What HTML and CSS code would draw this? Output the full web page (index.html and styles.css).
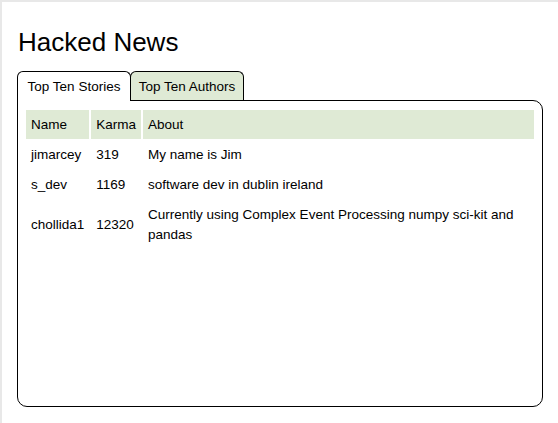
FILE: index.html
```html
<!DOCTYPE html>
<html>
<head>
<meta charset="utf-8">
<title>Hacked News</title>
<link rel="stylesheet" href="styles.css">
</head>
<body>
<div class="page">
  <h1 class="title">Hacked News</h1>
  <div class="tabs">
    <div class="tab tab-active">Top Ten Stories</div>
    <div class="tab tab-inactive">Top Ten Authors</div>
  </div>
  <div class="panel">
    <table class="authors">
      <thead>
        <tr><th>Name</th><th>Karma</th><th>About</th></tr>
      </thead>
      <tbody>
        <tr><td>jimarcey</td><td>319</td><td>My name is Jim</td></tr>
        <tr><td>s_dev</td><td>1169</td><td>software dev in dublin ireland</td></tr>
        <tr><td>chollida1</td><td>12320</td><td>Currently using Complex Event Processing numpy sci-kit and pandas</td></tr>
      </tbody>
    </table>
  </div>
</div>
</body>
</html>
```

FILE: styles.css
```css
html, body {
  margin: 0;
  padding: 0;
  background: #ffffff;
}
body {
  font-family: "Liberation Sans", Arial, Helvetica, sans-serif;
  color: #000;
}
.page {
  box-sizing: border-box;
  min-height: 100vh;
  border-top: 2px solid #e8e8e8;
  border-left: 2px solid #e8e8e8;
  padding: 0 15px 16px 15px;
}
.title {
  margin: 26px 0 14px 1px;
  font-size: 26px;
  font-weight: normal;
  line-height: 29px;
}
.tabs {
  display: flex;
}
.tab {
  box-sizing: border-box;
  width: 114px;
  height: 30px;
  margin-bottom: -1px;
  border: 1px solid #000;
  border-bottom: none;
  border-radius: 6px 6px 0 0;
  font-size: 13.5px;
  line-height: 18px;
  padding-top: 6px;
  text-align: center;
  white-space: nowrap;
}
.tab-active {
  position: relative;
  z-index: 1;
  background: #ffffff;
}
.tab-inactive {
  margin-left: -1px;
  background: #dfead5;
  height: 29px;
  margin-bottom: 0;
}
.panel {
  height: 307px;
  box-sizing: border-box;
  border: 1px solid #000;
  border-radius: 0 10px 10px 10px;
  padding: 7px 6px;
}
.authors {
  width: 100%;
  border-spacing: 2px;
  font-size: 13.5px;
  line-height: 20px;
}
.authors th {
  background: #dfead5;
  font-weight: normal;
  text-align: left;
  padding: 5px 5px 4px 5px;
}
.authors td {
  padding: 4px 5px;
  vertical-align: middle;
}
```
